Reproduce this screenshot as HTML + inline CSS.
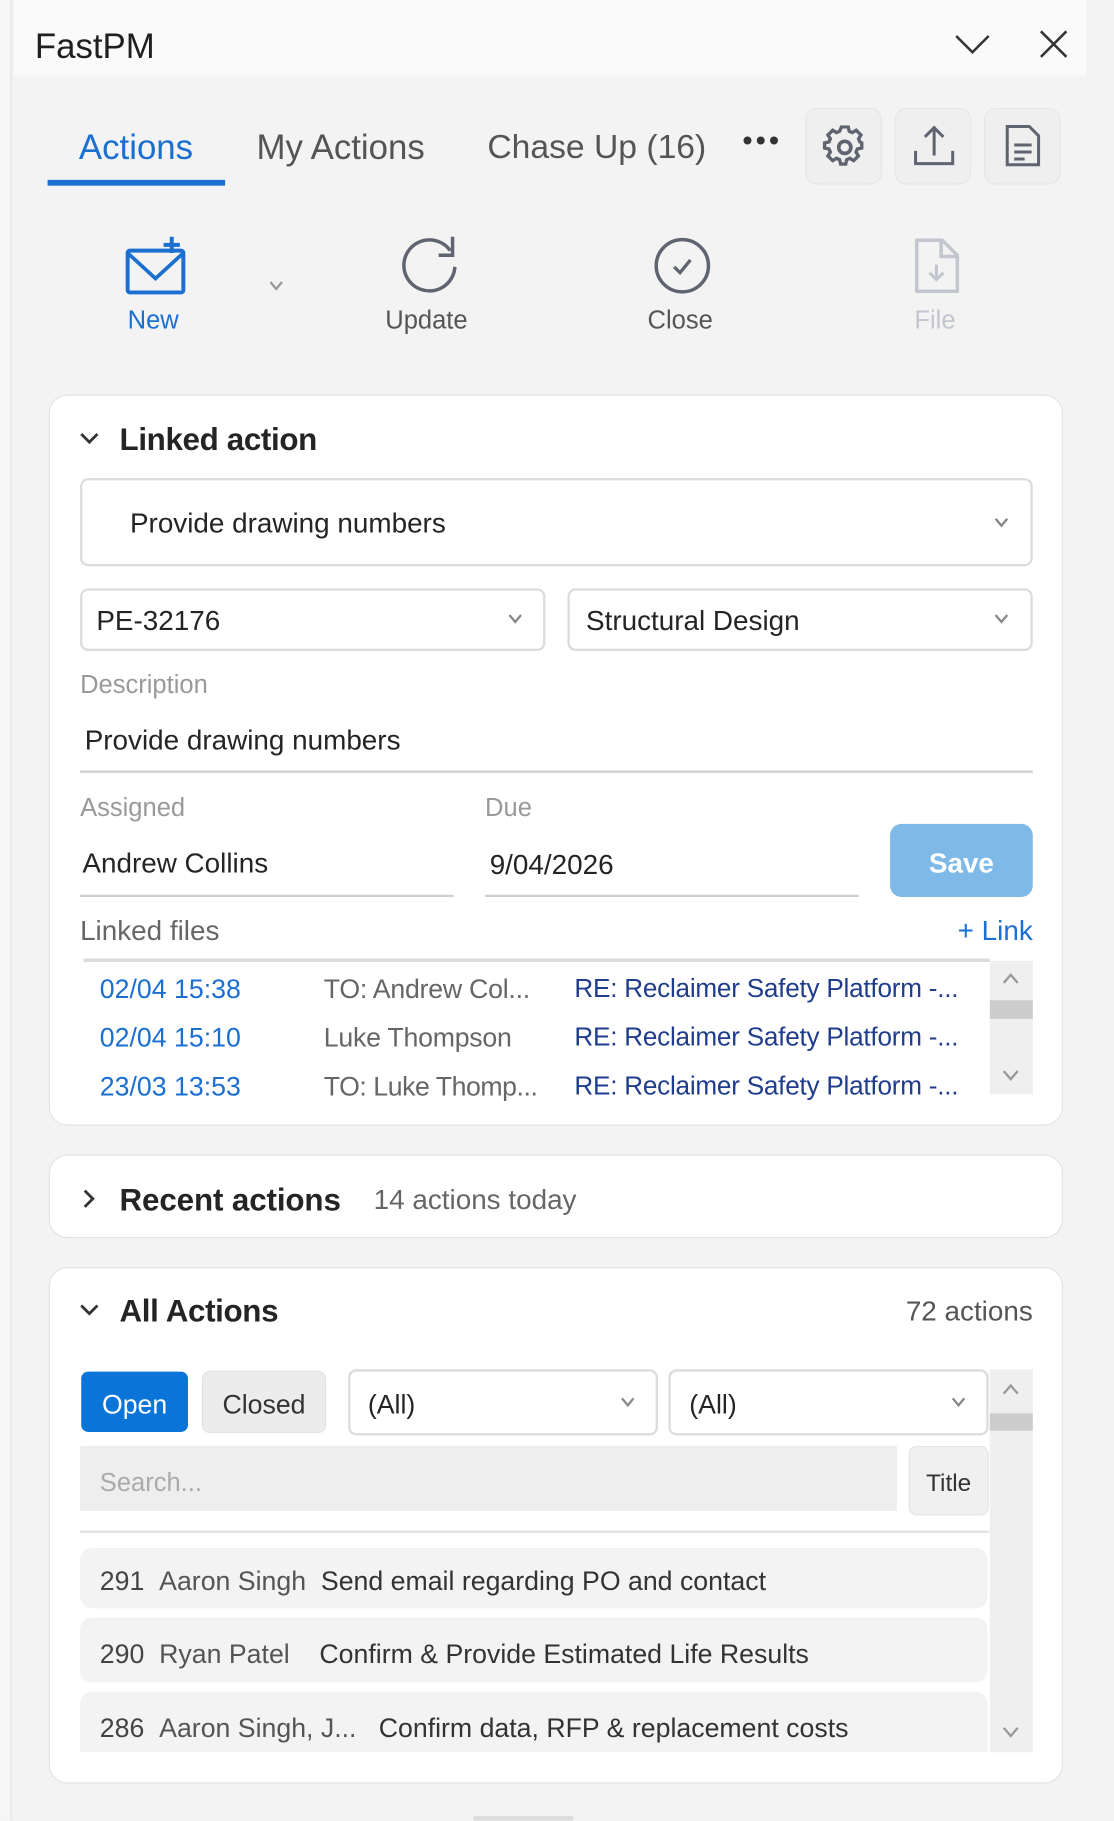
<!DOCTYPE html>
<html><head><meta charset="utf-8"><style>
html,body{margin:0;padding:0;width:1114px;height:1821px;overflow:hidden;background:#f3f3f3}
#w{position:absolute;left:0;top:0;width:960px;height:1569px;transform:scale(1.16042);transform-origin:0 0;font-family:"Liberation Sans",sans-serif;color:#242424}
.a{position:absolute}
.t{position:absolute;white-space:nowrap;line-height:1;margin-top:2px}
.card{position:absolute;left:42px;width:872px;background:#fff;border:1.5px solid #e3e3e3;border-radius:16px}
.sel{position:absolute;background:#fff;border:2px solid #dcdcdc;border-radius:7px;box-sizing:border-box}
.ib{position:absolute;top:93px;width:66px;height:66px;background:#efefef;border:1.5px solid #e6e6e6;border-radius:10px;box-sizing:border-box}
.row{position:absolute;left:69px;width:782px;background:#f3f3f3;border-radius:10px}
.subj{font-size:22.5px;color:#1f3d8c;letter-spacing:-.2px}
</style></head><body><div id="w">
<div class="a" style="left:0;top:0;width:9px;height:1569px;background:#f6f6f6;border-right:1.5px solid #e2e2e2"></div>
<div class="a" style="left:12px;top:0;width:924px;height:65px;background:#fafafa"></div>
<div class="t" style="left:30px;top:24px;font-size:30px;color:#1f1f1f">FastPM</div>
<svg class="a" style="left:820px;top:26px" width="36" height="24"><path d="M4 5 L18 19 L32 5" fill="none" stroke="#333" stroke-width="2.2"/></svg>
<svg class="a" style="left:894px;top:24px" width="28" height="28"><path d="M3 3 L25 25 M25 3 L3 25" fill="none" stroke="#333" stroke-width="2.2"/></svg>

<div class="t" style="left:68px;top:111px;font-size:30px;color:#1a6fd1">Actions</div>
<div class="a" style="left:41px;top:155px;width:153px;height:5px;background:#1a6fd1"></div>
<div class="t" style="left:221px;top:111px;font-size:30px;color:#555">My Actions</div>
<div class="t" style="left:420px;top:111px;font-size:29px;color:#555">Chase Up (16)</div>
<div class="t" style="left:640px;top:108px;font-size:24px;color:#333;letter-spacing:3px;font-weight:bold">•••</div>
<div class="ib" style="left:694px"></div><div class="ib" style="left:771px"></div><div class="ib" style="left:848px"></div>
<svg class="a" style="left:709px;top:108px" width="38" height="38" viewBox="0 0 24 24"><path d="M10 2h4l.6 2.6 1.8.8 2.3-1.4 2.8 2.8-1.4 2.3.8 1.8L22 11.5v3l-2.6.6-.8 1.8 1.4 2.3-2.8 2.8-2.3-1.4-1.8.8L12.5 24h-3l-.6-2.6-1.8-.8-2.3 1.4-2.8-2.8 1.4-2.3-.8-1.8L0 14.5v-3l2.6-.6.8-1.8L2 6.8 4.8 4l2.3 1.4 1.8-.8z" transform="translate(1 -1) scale(.92)" fill="none" stroke="#5f6470" stroke-width="2"/><circle cx="12" cy="12" r="3.3" fill="none" stroke="#5f6470" stroke-width="2"/></svg>
<svg class="a" style="left:786px;top:106px" width="38" height="40"><path d="M19 4 V28 M11 12 L19 4 L27 12 M3 24 V35 H35 V24" fill="none" stroke="#5f6470" stroke-width="2.6"/></svg>
<svg class="a" style="left:864px;top:106px" width="36" height="40"><path d="M4 3 H23 L31 11 V36 H4 Z" fill="none" stroke="#5f6470" stroke-width="2.6"/><path d="M10 19 H25 M10 25 H25 M10 31 H19" stroke="#5f6470" stroke-width="2.6"/></svg>

<svg class="a" style="left:106px;top:202px" width="56" height="54"><rect x="4" y="14" width="48" height="36" rx="2" fill="none" stroke="#1a6fd1" stroke-width="3.4"/><path d="M4 16 L28 38 L52 16" fill="none" stroke="#1a6fd1" stroke-width="3.2"/><path d="M42 2 V16 M35 9 H49" stroke="#1a6fd1" stroke-width="3.4"/></svg>
<div class="t" style="left:110px;top:263px;font-size:22px;color:#1a6fd1">New</div>
<svg class="a" style="left:231px;top:240px" width="14" height="12"><path d="M2 3 L7 9 L12 3" fill="none" stroke="#999" stroke-width="2"/></svg>
<svg class="a" style="left:342px;top:202px" width="56" height="54"><path d="M46 14 A22 22 0 1 0 50 28" fill="none" stroke="#5f6470" stroke-width="3"/><path d="M48 2 V18 H36" fill="none" stroke="#5f6470" stroke-width="3"/></svg>
<div class="t" style="left:332px;top:263px;font-size:22px;color:#555">Update</div>
<svg class="a" style="left:562px;top:203px" width="54" height="52"><circle cx="26" cy="26" r="22.5" fill="none" stroke="#5f6470" stroke-width="3"/><path d="M19 27 L24 32 L33 21" fill="none" stroke="#5f6470" stroke-width="2.8"/></svg>
<div class="t" style="left:558px;top:263px;font-size:22px;color:#555">Close</div>
<svg class="a" style="left:786px;top:203px" width="44" height="52"><path d="M4 4 H26 L39 17 V48 H4 Z" fill="none" stroke="#c3c6cf" stroke-width="3" stroke-linejoin="round"/><path d="M25 4 V18 H39" fill="none" stroke="#c3c6cf" stroke-width="3"/><path d="M21 25 V38 M15 32 L21 38 L27 32" fill="none" stroke="#c3c6cf" stroke-width="2.6"/></svg>
<div class="t" style="left:788px;top:263px;font-size:22px;color:#c3c6cf">File</div>

<div class="card" style="top:340px;height:628px"></div>
<svg class="a" style="left:68px;top:371px" width="18" height="14"><path d="M2 3 L9 10 L16 3" fill="none" stroke="#333" stroke-width="2.4"/></svg>
<div class="t" style="left:103px;top:364px;font-size:27px;color:#242424;font-weight:bold;letter-spacing:-.3px">Linked action</div>
<div class="sel" style="left:69px;top:412px;width:821px;height:76px"></div>
<div class="t" style="left:112px;top:438px;font-size:24px">Provide drawing numbers</div>
<svg class="a" style="left:856px;top:444px" width="14" height="12"><path d="M2 3 L7 9 L12 3" fill="none" stroke="#888" stroke-width="2"/></svg>
<div class="sel" style="left:69px;top:507px;width:401px;height:54px"></div>
<div class="t" style="left:83px;top:522px;font-size:24px">PE-32176</div>
<svg class="a" style="left:437px;top:527px" width="14" height="12"><path d="M2 3 L7 9 L12 3" fill="none" stroke="#888" stroke-width="2"/></svg>
<div class="sel" style="left:489px;top:507px;width:401px;height:54px"></div>
<div class="t" style="left:505px;top:522px;font-size:24px">Structural Design</div>
<svg class="a" style="left:856px;top:527px" width="14" height="12"><path d="M2 3 L7 9 L12 3" fill="none" stroke="#888" stroke-width="2"/></svg>
<div class="t" style="left:69px;top:577px;font-size:22px;color:#999">Description</div>
<div class="t" style="left:73px;top:625px;font-size:24px">Provide drawing numbers</div>
<div class="a" style="left:69px;top:664px;width:821px;height:2px;background:#cfcfcf"></div>
<div class="t" style="left:69px;top:683px;font-size:22px;color:#999">Assigned</div>
<div class="t" style="left:418px;top:683px;font-size:22px;color:#999">Due</div>
<div class="t" style="left:71px;top:731px;font-size:24px">Andrew Collins</div>
<div class="t" style="left:422px;top:732px;font-size:24px">9/04/2026</div>
<div class="a" style="left:69px;top:771px;width:322px;height:2px;background:#cfcfcf"></div>
<div class="a" style="left:418px;top:771px;width:322px;height:2px;background:#cfcfcf"></div>
<div class="a" style="left:767px;top:710px;width:123px;height:63px;background:#7fb9e8;border-radius:10px"></div>
<div class="t" style="left:767px;width:123px;text-align:center;top:731px;font-size:24px;color:#fff;font-weight:bold">Save</div>
<div class="t" style="left:69px;top:789px;font-size:24px;color:#666">Linked files</div>
<div class="t" style="right:70px;top:789px;font-size:24px;color:#1a6fd1">+ Link</div>
<div class="a" style="left:72px;top:826px;width:781px;height:3px;background:#dcdcdc"></div>
<div class="a" style="left:853px;top:828px;width:37px;height:115px;background:#efefef"></div>
<div class="a" style="left:853px;top:862px;width:37px;height:16px;background:#cdcdcd"></div>
<svg class="a" style="left:863px;top:837px" width="16" height="12"><path d="M2 10 L8 3 L14 10" fill="none" stroke="#999" stroke-width="2"/></svg>
<svg class="a" style="left:863px;top:920px" width="16" height="12"><path d="M2 3 L8 10 L14 3" fill="none" stroke="#999" stroke-width="2"/></svg>
<div class="t" style="left:86px;top:839px;font-size:23px;color:#1a6fd1">02/04 15:38</div>
<div class="t" style="left:279px;top:839px;font-size:23px;color:#666;letter-spacing:-.2px">TO: Andrew Col...</div>
<div class="t subj" style="left:495px;top:839px">RE: Reclaimer Safety Platform -...</div>
<div class="t" style="left:86px;top:881px;font-size:23px;color:#1a6fd1">02/04 15:10</div>
<div class="t" style="left:279px;top:881px;font-size:23px;color:#666;letter-spacing:-.2px">Luke Thompson</div>
<div class="t subj" style="left:495px;top:881px">RE: Reclaimer Safety Platform -...</div>
<div class="t" style="left:86px;top:923px;font-size:23px;color:#1a6fd1">23/03 13:53</div>
<div class="t" style="left:279px;top:923px;font-size:23px;color:#666;letter-spacing:-.4px">TO: Luke Thomp...</div>
<div class="t subj" style="left:495px;top:923px">RE: Reclaimer Safety Platform -...</div>

<div class="card" style="top:995px;height:70px"></div>
<svg class="a" style="left:70px;top:1024px" width="14" height="18"><path d="M3 2 L10 9 L3 16" fill="none" stroke="#333" stroke-width="2.4"/></svg>
<div class="t" style="left:103px;top:1019px;font-size:27px;font-weight:bold;letter-spacing:-.1px">Recent actions</div>
<div class="t" style="left:322px;top:1021px;font-size:24px;color:#666">14 actions today</div>

<div class="card" style="top:1092px;height:443px"></div>
<svg class="a" style="left:68px;top:1122px" width="18" height="14"><path d="M2 3 L9 10 L16 3" fill="none" stroke="#333" stroke-width="2.4"/></svg>
<div class="t" style="left:103px;top:1115px;font-size:27px;font-weight:bold;letter-spacing:-.3px">All Actions</div>
<div class="t" style="right:70px;top:1117px;font-size:24px;color:#555">72 actions</div>
<div class="a" style="left:70px;top:1182px;width:92px;height:52px;background:#0a74d8;border-radius:6px"></div>
<div class="t" style="left:70px;width:92px;text-align:center;top:1197px;font-size:23px;color:#fff">Open</div>
<div class="a" style="left:174px;top:1181px;width:107px;height:54px;background:#ececec;border:1.5px solid #e2e2e2;border-radius:7px;box-sizing:border-box"></div>
<div class="t" style="left:174px;width:107px;text-align:center;top:1197px;font-size:23px;color:#333">Closed</div>
<div class="sel" style="left:300px;top:1180px;width:267px;height:57px"></div>
<div class="t" style="left:317px;top:1197px;font-size:23px">(All)</div>
<svg class="a" style="left:534px;top:1202px" width="14" height="12"><path d="M2 3 L7 9 L12 3" fill="none" stroke="#888" stroke-width="2"/></svg>
<div class="sel" style="left:576px;top:1180px;width:276px;height:57px"></div>
<div class="t" style="left:594px;top:1197px;font-size:23px">(All)</div>
<svg class="a" style="left:819px;top:1202px" width="14" height="12"><path d="M2 3 L7 9 L12 3" fill="none" stroke="#888" stroke-width="2"/></svg>
<div class="a" style="left:853px;top:1180px;width:37px;height:330px;background:#efefef"></div>
<div class="a" style="left:853px;top:1218px;width:37px;height:15px;background:#cdcdcd"></div>
<svg class="a" style="left:863px;top:1191px" width="16" height="12"><path d="M2 10 L8 3 L14 10" fill="none" stroke="#999" stroke-width="2"/></svg>
<svg class="a" style="left:863px;top:1486px" width="16" height="12"><path d="M2 3 L8 10 L14 3" fill="none" stroke="#999" stroke-width="2"/></svg>
<div class="a" style="left:69px;top:1246px;width:704px;height:56px;background:#eeeeee"></div>
<div class="t" style="left:86px;top:1265px;font-size:22px;color:#aaa">Search...</div>
<div class="a" style="left:783px;top:1246px;width:69px;height:60px;background:#f0f0f0;border:1.5px solid #e4e4e4;border-radius:7px;box-sizing:border-box"></div>
<div class="t" style="left:783px;width:69px;text-align:center;top:1266px;font-size:21px;color:#333">Title</div>
<div class="a" style="left:69px;top:1319px;width:783px;height:1.5px;background:#e2e2e2"></div>
<div class="row" style="top:1334px;height:52px"></div>
<div class="t" style="left:86px;top:1349px;font-size:23px;color:#444">291&nbsp;&nbsp;<span style="color:#555">Aaron Singh</span>&nbsp;&nbsp;<span style="color:#333">Send email regarding PO and contact</span></div>
<div class="row" style="top:1394px;height:56px"></div>
<div class="t" style="left:86px;top:1412px;font-size:23px;color:#444">290&nbsp;&nbsp;<span style="color:#555">Ryan Patel</span>&nbsp;&nbsp;&nbsp;&nbsp;<span style="color:#333">Confirm &amp; Provide Estimated Life Results</span></div>
<div class="row" style="top:1458px;height:52px;border-radius:10px 10px 0 0"></div>
<div class="t" style="left:86px;top:1476px;font-size:23px;color:#444">286&nbsp;&nbsp;<span style="color:#555">Aaron Singh, J...</span>&nbsp;&nbsp;&nbsp;<span style="color:#333">Confirm data, RFP &amp; replacement costs</span></div>
<div class="a" style="left:408px;top:1565px;width:86px;height:4px;background:#dcdcdc"></div>
</div></body></html>
